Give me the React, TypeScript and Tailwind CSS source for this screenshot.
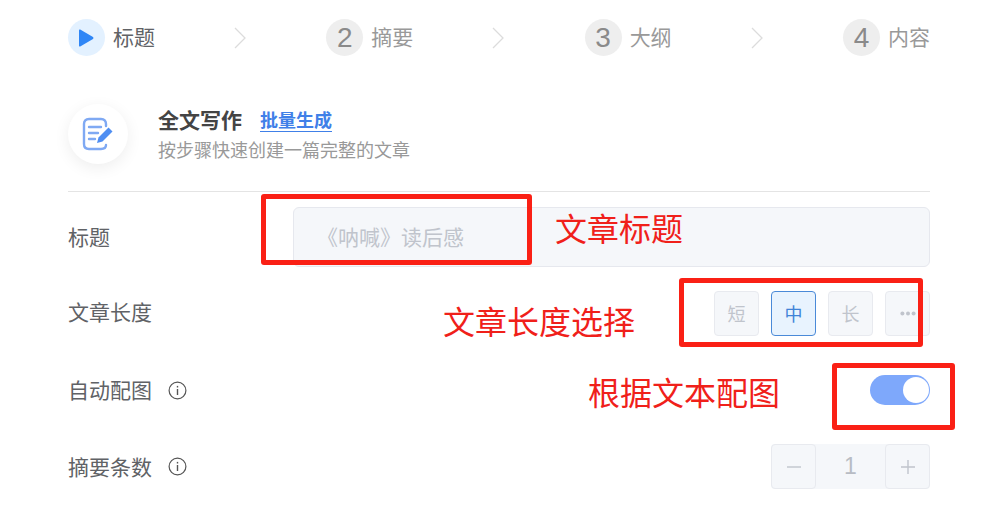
import React from "react";

const font = { fontFamily: '"Noto Sans CJK SC", "Liberation Sans", sans-serif' };

function Chevron() {
  return (
    <svg width="14" height="24" viewBox="0 0 14 24" fill="none" className="shrink-0 -ml-px">
      <path d="M2 2 L12 12 L2 22" stroke="#dcdcdc" strokeWidth="1.3" />
    </svg>
  );
}

function Step({ n, label }: { n: string; label: string }) {
  return (
    <div className="flex items-center gap-[8px]">
      <div className="w-[37px] h-[37px] rounded-full bg-[#eeeeee] flex items-center justify-center text-[#8a8a8a] text-[28px] font-['Liberation_Sans']">
        {n}
      </div>
      <span className="text-[21px] text-[#999999] leading-none pb-[2px]">{label}</span>
    </div>
  );
}

function Info() {
  return (
    <svg width="19" height="19" viewBox="0 0 19 19" fill="none" className="ml-[16px]">
      <circle cx="9.5" cy="9.5" r="8.4" stroke="#555555" strokeWidth="1.2" />
      <rect x="8.8" y="8" width="1.4" height="6" fill="#555555" />
      <rect x="8.8" y="4.9" width="1.4" height="1.6" fill="#555555" />
    </svg>
  );
}

function Opt({ label, active }: { label: React.ReactNode; active?: boolean }) {
  return (
    <div
      className={
        active
          ? "w-[45px] h-[45px] rounded-[4px] border border-[#4a8ad8] bg-[#e8f3fe] text-[#3f83d8] flex items-center justify-center text-[18px]"
          : "w-[45px] h-[45px] rounded-[4px] border border-[#e8eaef] bg-[#f5f7fa] text-[#c0c4cc] flex items-center justify-center text-[18px]"
      }
    >
      {label}
    </div>
  );
}

function Dots() {
  return (
    <svg width="16" height="5" viewBox="0 0 16 5">
      <circle cx="2.4" cy="2.5" r="2" fill="#c0c4cc" />
      <circle cx="8" cy="2.5" r="2" fill="#c0c4cc" />
      <circle cx="13.6" cy="2.5" r="2" fill="#c0c4cc" />
    </svg>
  );
}

export default function App() {
  return (
    <div className="relative w-[985px] h-[525px] bg-white overflow-hidden" style={font}>
      <div className="pl-[68px] pr-[55px] pt-[19px]">
        {/* steps */}
        <div className="flex items-center justify-between h-[37px]">
          <div className="flex items-center gap-[8px]">
            <div className="w-[37px] h-[37px] rounded-full bg-[#e3f1ff] flex items-center justify-center pr-[2px]">
              <svg width="16" height="18" viewBox="0 0 16 18">
                <path d="M1 1.2 Q1 0 2.2 .6 L15 8 Q16 9 15 10 L2.2 17.4 Q1 18 1 16.8 Z" fill="#2f86f6" />
              </svg>
            </div>
            <span className="text-[21px] text-[#606266] leading-none pb-[2px]">标题</span>
          </div>
          <Chevron />
          <Step n="2" label="摘要" />
          <Chevron />
          <Step n="3" label="大纲" />
          <Chevron />
          <Step n="4" label="内容" />
        </div>

        {/* header */}
        <div className="flex items-center mt-[48px] h-[60px]">
          <div className="w-[60px] h-[60px] rounded-full bg-white shadow-[0_4px_16px_rgba(0,0,0,0.07)] flex items-center justify-center">
            <svg width="32" height="34" viewBox="0 0 32 34" fill="none">
              <path
                d="M24 9 V7 Q24 2 19 2 H7 Q2 2 2 7 V27 Q2 32 7 32 H19 Q24 32 24 28"
                stroke="#7fa9f3"
                strokeWidth="2.4"
                strokeLinecap="round"
              />
              <path d="M7 10 H19 M7 16 H16 M7 22 H13" stroke="#7fa9f3" strokeWidth="2.4" strokeLinecap="round" />
              <path d="M15 26 L16.5 20.5 L26.5 10.5 L30.5 14.5 L20.5 24.5 Z" fill="#4f8ef2" />
            </svg>
          </div>
          <div className="ml-[30px] flex flex-col -mt-[3px]">
            <div className="flex items-center h-[30px]">
              <span className="text-[21px] leading-none font-bold text-[#444444]">全文写作</span>
              <span className="ml-[18px] text-[18px] leading-[23px] font-bold text-[#4080e8] border-b border-[#4080e8]">
                批量生成
              </span>
            </div>
            <span className="text-[18px] leading-[24px] text-[#999999] mt-[2px]">按步骤快速创建一篇完整的文章</span>
          </div>
        </div>

        <div className="h-px bg-[#e4e4e4] mt-[27px]" />

        {/* form */}
        <div className="flex items-center justify-between mt-[15px] h-[60px]">
          <span className="text-[21px] text-[#606266]">标题</span>
          <div className="w-[637px] h-[60px] rounded-[6px] border border-[#e6e8ee] bg-[#f5f7fa] flex items-center pl-[23px] text-[21px] text-[#c0c4cc]">
            《呐喊》读后感
          </div>
        </div>

        <div className="flex items-center justify-between mt-[24px] h-[45px]">
          <span className="text-[21px] text-[#606266] pb-[3px]">文章长度</span>
          <div className="flex gap-[12px]">
            <Opt label="短" />
            <Opt label="中" active />
            <Opt label="长" />
            <Opt label={<Dots />} />
          </div>
        </div>

        <div className="flex items-center justify-between mt-[39px] h-[30px]">
          <div className="flex items-center">
            <span className="text-[21px] text-[#606266]">自动配图</span>
            <Info />
          </div>
          <div className="w-[60px] h-[30px] rounded-full bg-[#7ea8fb] flex items-center justify-end pr-[1px]">
            <div className="w-[26px] h-[26px] rounded-full bg-white" />
          </div>
        </div>

        <div className="flex items-center justify-between mt-[39px] h-[45px]">
          <div className="flex items-center">
            <span className="text-[21px] text-[#606266]">摘要条数</span>
            <Info />
          </div>
          <div className="flex items-stretch h-[45px] bg-[#f5f7fa] rounded-[4px]">
            <div className="w-[45px] rounded-[4px] border border-[#e8eaef] flex items-center justify-center">
              <svg width="16" height="16" viewBox="0 0 16 16">
                <path d="M1 8 H15" stroke="#c0c4cc" strokeWidth="1.4" />
              </svg>
            </div>
            <div className="w-[69px] flex items-center justify-center text-[#b8bcc4] text-[23px] font-['Liberation_Sans']">1</div>
            <div className="w-[45px] rounded-[4px] border border-[#e8eaef] flex items-center justify-center">
              <svg width="16" height="16" viewBox="0 0 16 16">
                <path d="M1 8 H15 M8 1 V15" stroke="#c0c4cc" strokeWidth="1.4" />
              </svg>
            </div>
          </div>
        </div>
      </div>

      {/* red annotations drawn over the screenshot */}
      <div className="absolute left-[261px] top-[194px] w-[271px] h-[71px] border-[5px] border-[#fa2015] rounded-[3px]" />
      <div className="absolute left-[679px] top-[278px] w-[244px] h-[69px] border-[5px] border-[#fa2015] rounded-[3px]" />
      <div className="absolute left-[832px] top-[363px] w-[123px] h-[67px] border-[5px] border-[#fa2015] rounded-[3px]" />
      <span className="absolute left-[555px] top-[204px] text-[32px] leading-[46px] text-[#f0201a]">文章标题</span>
      <span className="absolute left-[443px] top-[297px] text-[32px] leading-[46px] text-[#f0201a]">文章长度选择</span>
      <span className="absolute left-[588px] top-[368px] text-[32px] leading-[46px] text-[#f0201a]">根据文本配图</span>
    </div>
  );
}
